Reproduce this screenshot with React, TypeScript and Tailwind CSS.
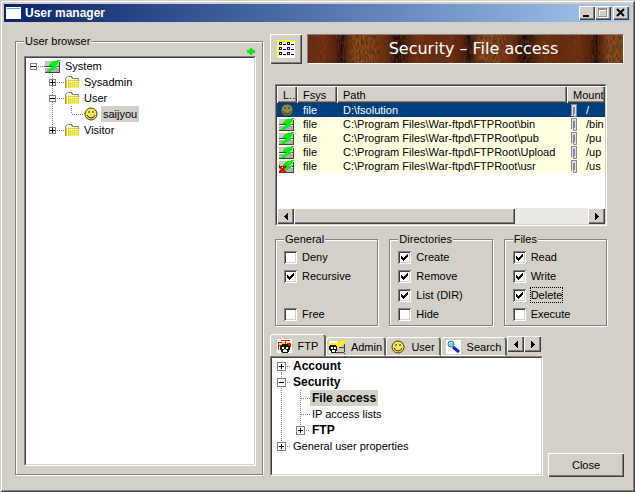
import React, { useState } from 'react'
import { clsx } from 'clsx'

// Classic bevels: a raised edge for buttons, a sunken one for lists
const raised = 'bg-[#d4d0c8] shadow-[inset_1px_1px_0_#fff,inset_-1px_-1px_0_#404040,inset_-2px_-2px_0_#808080]'
const sunken = 'border border-t-[#808080] border-l-[#808080] border-r-white border-b-white bg-white'
const sunkenInner = 'border border-t-[#404040] border-l-[#404040] border-r-[#d4d0c8] border-b-[#d4d0c8]'

const files = [
  { icon: 'smile', fsys: 'file', path: 'D:\\fsolution', mount: '/' },
  { icon: 'system', fsys: 'file', path: 'C:\\Program Files\\War-ftpd\\FTPRoot\\bin', mount: '/bin' },
  { icon: 'system', fsys: 'file', path: 'C:\\Program Files\\War-ftpd\\FTPRoot\\pub', mount: '/pu' },
  { icon: 'system', fsys: 'file', path: 'C:\\Program Files\\War-ftpd\\FTPRoot\\Upload', mount: '/up' },
  { icon: 'denied', fsys: 'file', path: 'C:\\Program Files\\War-ftpd\\FTPRoot\\usr', mount: '/us' },
]

function SystemIcon({ denied = false }: { denied?: boolean }) {
  return (
    <svg width="16" height="13" viewBox="0 0 16 13" shapeRendering="crispEdges" className="shrink-0">
      <path d="M0 1h14v5H0z" fill="#c8c8c8" />
      <path d="M0 8h14v4H0z" fill="#b0b0b0" />
      <path d="M0 6h15v1H0zM0 12h15v1H0zM14 2h1v11h-1z" fill="#404040" />
      <path d="M15 0L9 1 4 4v2h4l-7 6h4l9-6h-3z" fill="#00f010" />
      {denied && <path d="M0 6l7 7M7 6l-7 7" stroke="#f00000" strokeWidth="2" />}
    </svg>
  )
}

function SmileIcon({ dim = false }: { dim?: boolean }) {
  return (
    <svg width="14" height="14" viewBox="0 0 14 14" className="shrink-0">
      <circle cx="7" cy="7" r="6" fill={dim ? '#8c8c50' : '#f4e858'} stroke={dim ? '#303848' : '#404000'} />
      <path d="M5 4v2M9 4v2M3 8q1 3 4 3t4-3" fill="none" stroke="#303000" />
    </svg>
  )
}

function FolderIcon() {
  return (
    <svg width="16" height="14" viewBox="0 0 16 14" shapeRendering="crispEdges" className="shrink-0">
      <path d="M1.5 13V3.5l2-2h4l1 2h6V6" fill="#fffbd0" stroke="#909068" />
      <path d="M5 7h10v6H5z" fill="#ece040" />
      <path d="M2.5 13V5M4 5.5h10M4.5 6v7" stroke="#e0d020" />
      <path d="M5 8.5h10M5 10.5h10M5 12.5h10" stroke="#f8f4a0" strokeDasharray="1 1" />
    </svg>
  )
}

function Clip() {
  return (
    <svg width="7" height="13" viewBox="0 0 7 13" className="shrink-0">
      <path d="M0 0h6v12H0z" fill="#e0e0e8" />
      <path d="M.5 11V.5h5v12h-3V3h1v7" fill="none" stroke="#85858f" />
    </svg>
  )
}

function FtpIcon() {
  return (
    <svg width="15" height="14" viewBox="0 0 15 14" shapeRendering="crispEdges" className="shrink-0">
      <path d="M0 0h15v14H0z" fill="#fff" />
      <path d="M3 3h10v6H3z" fill="#f8e820" />
      <path d="M1 3h4v1H2v2h3v1H2v4H1zM4 1h9v1H9v3H8V2H4zM10 4h4v4h-3v3h-1z" fill="#f01010" />
      <path d="M5 5h6v1h1v1h1v4h-1v2h-1v1H5v-1H4v-2H3V7h1V6h1z" fill="#181808" />
      <path d="M5 8h2v2H5zM9 8h2v2H9zM6 11h4v2H6z" fill="#fff" />
      <path d="M7 10h2v1H7z" fill="#f8d800" />
    </svg>
  )
}

function AdminIcon() {
  return (
    <svg width="16" height="14" viewBox="0 0 16 14" shapeRendering="crispEdges" className="shrink-0">
      <path d="M7 2h9v12H7z" fill="#c8c8c8" />
      <path d="M0 1h8v12H0z" fill="#fff" />
      <path d="M7 7h8v1H7zM7 13h9v-1H7zM15 4h1v10h-1z" fill="#404040" />
      <path d="M0 3h6l9-3h1v2l-5 5-3 1-2-2H0z" fill="#fff010" />
      <path d="M1 5h6v1h1v5H7v2H2v-2H1v-1H0V6h1z" fill="#181808" />
      <path d="M2 7h2v2H2zM5 7h2v2H5zM3 10h3v2H3z" fill="#fff" />
    </svg>
  )
}

function SearchIcon() {
  return (
    <svg width="15" height="14" viewBox="0 0 15 14" className="shrink-0">
      <path d="M0 0h15v14H0z" fill="#fff" />
      <path d="M7 7l6 5" stroke="#1028d8" strokeWidth="3" />
      <circle cx="5" cy="4" r="3" fill="#60e0f8" stroke="#507080" />
      <path d="M3 4l2-2" stroke="#fff" />
    </svg>
  )
}

function Wood() {
  return (
    <svg width="100%" height="100%" className="col-start-1 row-start-1">
      <defs>
        <linearGradient id="planks">
          <stop offset="0" stopColor="#702808" />
          <stop offset=".12" stopColor="#803010" />
          <stop offset=".22" stopColor="#581c08" />
          <stop offset=".27" stopColor="#1c0c04" />
          <stop offset=".31" stopColor="#602808" />
          <stop offset=".36" stopColor="#904818" />
          <stop offset=".48" stopColor="#8c4818" />
          <stop offset=".62" stopColor="#742808" />
          <stop offset=".7" stopColor="#180804" />
          <stop offset=".75" stopColor="#381408" />
          <stop offset=".85" stopColor="#803008" />
          <stop offset="1" stopColor="#702808" />
        </linearGradient>
        <pattern id="wood" width="127" height="29" patternUnits="userSpaceOnUse">
          <rect width="127" height="29" fill="url(#planks)" />
        </pattern>
        <filter id="grain" x="0" y="0" width="100%" height="100%">
          <feTurbulence type="fractalNoise" baseFrequency=".6 .2" numOctaves="3" seed="8" />
          <feColorMatrix values="0 0 0 0 .08  0 0 0 0 .03  0 0 0 0 .01  3 0 0 0 -1.2" />
        </filter>
      </defs>
      <rect width="100%" height="100%" fill="url(#wood)" />
      <rect width="100%" height="100%" filter="url(#grain)" />
    </svg>
  )
}

// Dotted guide lines of a tree row
function Guide({ kind, small = false }: { kind: 'line' | 'tee' | 'end'; small?: boolean }) {
  const c = small ? 7.5 : 9.5
  return (
    <svg width="19" height="16" viewBox="0 0 19 16" className="shrink-0" shapeRendering="crispEdges">
      <path d={`M${c} 0v${kind === 'end' ? 8 : 16}`} stroke="#808080" strokeDasharray="1 1" />
      {kind !== 'line' && <path d={`M${c} 8.5H19`} stroke="#808080" strokeDasharray="1 1" />}
    </svg>
  )
}

function Toggle({ open, up = true, down = true, small = false }: { open: boolean; up?: boolean; down?: boolean; small?: boolean }) {
  const c = small ? 7.5 : 9.5
  const r = small ? 3 : 4
  return (
    <button type="button" aria-label={open ? 'Collapse' : 'Expand'} className="block shrink-0">
      <svg width="19" height="16" viewBox="0 0 19 16" shapeRendering="crispEdges">
        {up && <path d={`M${c} 0v5`} stroke="#808080" strokeDasharray="1 1" />}
        {down && <path d={`M${c} 12v4`} stroke="#808080" strokeDasharray="1 1" />}
        <path d={`M${c + r + 1} 8.5H19`} stroke="#808080" strokeDasharray="1 1" />
        <rect x={c - r} y={8.5 - r} width={r * 2} height={r * 2} fill="#fff" stroke="#808080" />
        <path d={`M${c - 2.5} 8.5h5`} stroke="#000" />
        {!open && <path d={`M${c} 6v5`} stroke="#000" />}
      </svg>
    </button>
  )
}

function Node({ children, icon, selected, bold }: { children: React.ReactNode; icon?: React.ReactNode; selected?: boolean; bold?: boolean }) {
  return (
    <span className="flex items-center gap-0.5">
      {icon && <span className="flex w-4 justify-center">{icon}</span>}
      <span className={clsx('h-4 px-0.5', selected && 'bg-[#d4d0c8]', bold && 'text-[12px] font-bold')}>{children}</span>
    </span>
  )
}

function Check({ label, on = false, focused = false }: { label: string; on?: boolean; focused?: boolean }) {
  const [checked, setChecked] = useState(on)
  return (
    <label className="flex h-4 items-center gap-1">
      <span className="grid">
        <input
          type="checkbox"
          checked={checked}
          onChange={(e) => setChecked(e.target.checked)}
          className="peer col-start-1 row-start-1 size-[13px] appearance-none bg-white shadow-[inset_1px_1px_0_#808080,inset_-1px_-1px_0_#fff,inset_2px_2px_0_#404040,inset_-2px_-2px_0_#d4d0c8]"
        />
        <svg width="13" height="13" viewBox="0 0 13 13" shapeRendering="crispEdges" className="pointer-events-none invisible col-start-1 row-start-1 peer-checked:visible">
          <path d="M3 5h1v1h1v1h1v-1h1v-1h1v-1h1v-1h1v3h-1v1h-1v1h-1v1h-1v1h-1v-1h-1v-1h-1z" fill="#000" />
        </svg>
      </span>
      <span className={clsx('border border-dotted leading-[14px]', focused ? 'border-black' : 'border-transparent')}>{label}</span>
    </label>
  )
}

function Group({ title, className, children }: { title: string; className?: string; children: React.ReactNode }) {
  return (
    <fieldset className={clsx('min-w-0 border border-[#808080] shadow-[1px_1px_0_#fff,inset_1px_1px_0_#fff]', className)}>
      <legend className="bg-[#d4d0c8] px-px leading-[14px]">{title}</legend>
      {children}
    </fieldset>
  )
}

function Arrow({ dir }: { dir: 'left' | 'right' }) {
  return (
    <button type="button" aria-label={dir === 'left' ? 'Scroll left' : 'Scroll right'} className={clsx(raised, 'flex h-4 w-[17px] shrink-0 items-center justify-center')}>
      <svg width="4" height="7" viewBox="0 0 4 7" shapeRendering="crispEdges">
        <path d={dir === 'left' ? 'M4 0v7L0 3.5z' : 'M0 0v7l4-3.5z'} />
      </svg>
    </button>
  )
}

function TitleBar() {
  return (
    <header className="flex h-[18px] shrink-0 items-center bg-linear-to-r from-[#0a246a] to-[#a6caf0] px-0.5 text-white">
      <svg width="15" height="12" viewBox="0 0 15 12" shapeRendering="crispEdges">
        <path d="M0 0h15v12H0z" fill="#fff" />
        <path d="M1 1h13v1H1z" fill="#60a8f0" />
      </svg>
      <h1 className="ml-1 flex-1 text-[12px] leading-4 font-bold">User manager</h1>
      <button type="button" aria-label="Minimize" className={clsx(raised, 'h-[14px] w-4')}>
        <svg width="16" height="14" shapeRendering="crispEdges"><path d="M4 9h6v2H4z" /></svg>
      </button>
      <button type="button" aria-label="Maximize" disabled className={clsx(raised, 'h-[14px] w-4')}>
        <svg width="16" height="14" shapeRendering="crispEdges">
          <path d="M4.5 3.5h8v8h-8zM4 4.5h9" fill="none" stroke="#fff" />
          <path d="M3.5 2.5h8v8h-8zM3 3.5h9" fill="none" stroke="#909090" />
        </svg>
      </button>
      <button type="button" aria-label="Close window" className={clsx(raised, 'ml-0.5 h-[14px] w-4')}>
        <svg width="16" height="14"><path d="M4 3l7 7M11 3l-7 7" stroke="#000" strokeWidth="2" /></svg>
      </button>
    </header>
  )
}

function UserBrowser() {
  return (
    <Group title="User browser" className="flex w-[248px] shrink-0 flex-col pr-[6px] pb-2 pl-2">
      <div className="flex h-2 shrink-0 items-start justify-end pr-px">
        <svg width="8" height="7" viewBox="0 0 8 7"><path d="M3 0h2v1h1v1h2v3H6v1H5v1H3V6H2V5H0V2h2V1h1z" fill="#10e820" /></svg>
      </div>
      <div className={clsx(sunken, 'flex-1')}>
        <ul className={clsx(sunkenInner, 'h-full')}>
          <li className="flex h-4"><Toggle small open up={false} down={false} /><Node icon={<SystemIcon />}>System</Node></li>
          <li className="flex h-4 pl-[19px]"><Toggle small open={false} /><Node icon={<FolderIcon />}>Sysadmin</Node></li>
          <li className="flex h-4 pl-[19px]"><Toggle small open /><Node icon={<FolderIcon />}>User</Node></li>
          <li className="flex h-4 pl-[19px]"><Guide small kind="line" /><Guide small kind="end" /><Node icon={<SmileIcon />} selected>saijyou</Node></li>
          <li className="flex h-4 pl-[19px]"><Toggle small open={false} down={false} /><Node icon={<FolderIcon />}>Visitor</Node></li>
        </ul>
      </div>
    </Group>
  )
}

function Banner() {
  return (
    <div className="flex h-[30px] gap-[5px]">
      <button type="button" aria-label="Options" className={clsx(raised, 'flex w-8 items-center justify-center')}>
        <svg width="18" height="18" viewBox="0 0 18 18" shapeRendering="crispEdges">
          <path d="M0 0h18v18H0z" fill="#ffff20" />
          <path d="M2 2h16v16H2z" fill="#fff" />
          <path d="M2 2h3v3H2zM10 2h3v3h-3zM2 7h3v3H2zM10 7h3v3h-3zM2 12h3v3H2zM10 12h3v3h-3z" fill="#101090" />
          <path d="M3 3h1v1H3zM11 3h1v1h-1zM3 8h1v1H3zM11 8h1v1h-1zM3 13h1v1H3zM11 13h1v1h-1z" fill="#fff" />
          <path d="M6 4.5h3M14 4.5h3M6 9.5h3M14 9.5h3M6 14.5h3M14 14.5h3" stroke="#000" />
        </svg>
      </button>
      <div className="grid flex-1 border border-t-[#808080] border-l-[#808080] border-r-white border-b-white">
        <Wood />
        <h2 className="z-10 col-start-1 row-start-1 self-center pl-4 text-center font-['DejaVu_Sans',sans-serif] text-[16px] text-white">Security – File access</h2>
      </div>
    </div>
  )
}

function FileList() {
  const [selected, setSelected] = useState(0)
  const head = 'h-[17px] overflow-hidden bg-[#d4d0c8] p-0 pl-1.5 text-left font-normal whitespace-nowrap shadow-[inset_1px_1px_0_#fff,inset_-1px_-1px_0_#404040,inset_-2px_-2px_0_#808080]'
  return (
    <div className={sunken}>
      <div className={clsx(sunkenInner, 'flex h-[140px] flex-col')}>
        <table className="w-full table-fixed border-collapse leading-[14px]">
          <thead>
            <tr>
              <th className={clsx(head, 'w-5')}>L..</th>
              <th className={clsx(head, 'w-10')}>Fsys</th>
              <th className={head}>Path</th>
              <th className={clsx(head, 'w-[38px]')}>Mount</th>
            </tr>
          </thead>
          <tbody>
            {files.map((f, i) => (
              <tr key={f.path} onClick={() => setSelected(i)} className={clsx('h-[14px]', i === selected ? 'bg-[#003f7d] text-white' : 'bg-[#ffffe1]')}>
                <td className="p-0 pl-0.5">
                  {f.icon === 'smile' ? <span className="flex pl-px"><SmileIcon dim /></span> : <span className="flex"><SystemIcon denied={f.icon === 'denied'} /></span>}
                </td>
                <td className="p-0 pl-1.5">{f.fsys}</td>
                <td className="truncate p-0 pl-1.5">{f.path}</td>
                <td className="p-0 pl-1"><span className="flex items-center gap-2"><Clip />{f.mount}</span></td>
              </tr>
            ))}
          </tbody>
        </table>
        <div className="mt-auto flex h-4 bg-[#ebe9e5]">
          <Arrow dir="left" />
          <div className={clsx(raised, 'w-[221px]')} />
          <div className="flex-1" />
          <Arrow dir="right" />
        </div>
      </div>
    </div>
  )
}

function Tabs() {
  const [active, setActive] = useState('FTP')
  const tabs = [
    { name: 'FTP', icon: <FtpIcon />, width: 'w-14' },
    { name: 'Admin', icon: <AdminIcon />, width: 'w-[60px]' },
    { name: 'User', icon: <SmileIcon />, width: 'w-[55px]' },
    { name: 'Search', icon: <SearchIcon />, width: 'w-[66px]' },
  ]
  return (
    <div className="w-[273px] pb-px">
      <div role="tablist" className="flex h-[22px] items-end">
        {tabs.map((t) => (
          <button
            key={t.name}
            type="button"
            role="tab"
            aria-selected={t.name === active}
            onClick={() => setActive(t.name)}
            className={clsx(
              'flex shrink-0 items-center justify-center gap-1.5 rounded-t-sm border-t border-r-2 border-l border-t-white border-r-[#606060] border-l-white',
              t.width,
              t.name === active ? 'h-[22px]' : 'h-[19px] border-b border-b-white',
            )}
          >
            {t.icon}
            {t.name}
          </button>
        ))}
        <span className="flex self-start pt-0.5"><Arrow dir="left" /><Arrow dir="right" /></span>
      </div>
      <div className={sunken}>
        <ul className={clsx(sunkenInner, 'h-[118px]')}>
          <li className="flex h-4"><Toggle open={false} up={false} /><Node bold>Account</Node></li>
          <li className="flex h-4"><Toggle open /><Node bold>Security</Node></li>
          <li className="flex h-4"><Guide kind="line" /><Guide kind="tee" /><Node bold selected>File access</Node></li>
          <li className="flex h-4"><Guide kind="line" /><Guide kind="tee" /><Node>IP access lists</Node></li>
          <li className="flex h-4"><Guide kind="line" /><Toggle open={false} down={false} /><Node bold>FTP</Node></li>
          <li className="flex h-4"><Toggle open={false} down={false} /><Node>General user properties</Node></li>
        </ul>
      </div>
    </div>
  )
}

export default function App() {
  return (
    <div className="flex min-h-screen flex-col bg-[#d4d0c8] p-1 font-['Liberation_Sans',Arial,sans-serif] text-[11px] leading-4 text-black shadow-[inset_1px_1px_0_#d4d0c8,inset_-1px_-1px_0_#404040,inset_2px_2px_0_#fff,inset_-2px_-2px_0_#808080]">
      <TitleBar />
      <main className="flex flex-1 gap-[7px] pr-[7px] pb-[11px] pl-[11px]">
        <div className="flex pt-3 pb-0.5"><UserBrowser /></div>
        <div className="flex min-w-0 flex-1 flex-col pt-3">
          <Banner />
          <div className="mt-5 mr-[17px] ml-[5px]">
            <FileList />
            <div className="mt-1.5 grid grid-cols-3 gap-[11px]">
              <Group title="General" className="h-[94px] pl-2">
                <div className="flex flex-col gap-[3px] pt-[3px]">
                  <Check label="Deny" />
                  <Check label="Recursive" on />
                  <div className="h-4" />
                  <Check label="Free" />
                </div>
              </Group>
              <Group title="Directories" className="h-[94px] pl-2">
                <div className="flex flex-col gap-[3px] pt-[3px]">
                  <Check label="Create" on />
                  <Check label="Remove" on />
                  <Check label="List (DIR)" on />
                  <Check label="Hide" />
                </div>
              </Group>
              <Group title="Files" className="h-[94px] pl-2">
                <div className="flex flex-col gap-[3px] pt-[3px]">
                  <Check label="Read" on />
                  <Check label="Write" on />
                  <Check label="Delete" on focused />
                  <Check label="Execute" />
                </div>
              </Group>
            </div>
          </div>
          <div className="flex flex-1 items-end justify-between">
            <Tabs />
            <button type="button" className={clsx(raised, 'h-6 w-[76px]')}>Close</button>
          </div>
        </div>
      </main>
    </div>
  )
}
